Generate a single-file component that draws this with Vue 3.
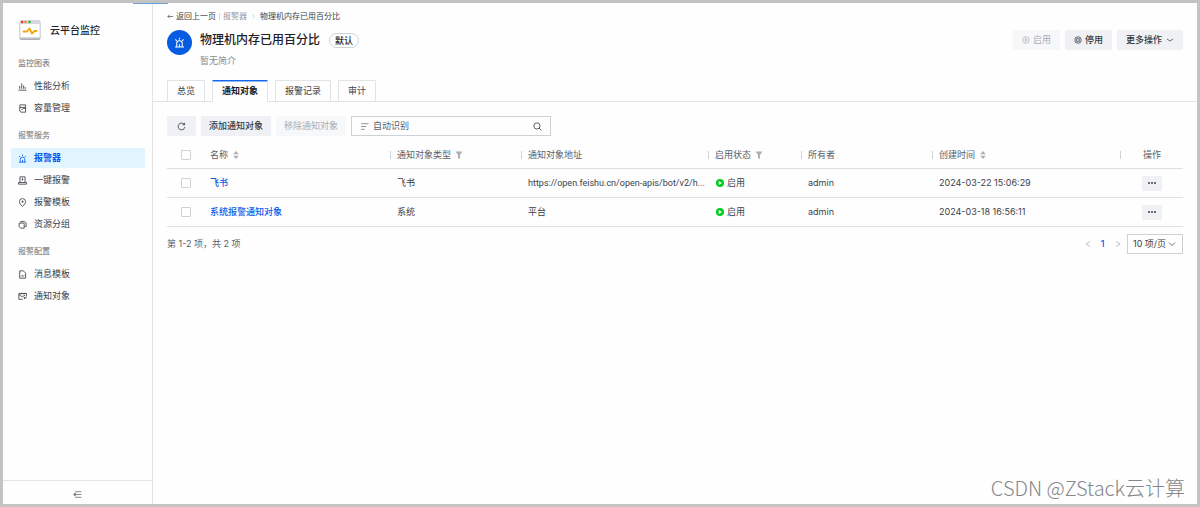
<script setup>
import { ref } from 'vue'

const groups = [
  { title: '监控图表', items: [{ label: '性能分析', icon: 'chart' }, { label: '容量管理', icon: 'disk' }] },
  {
    title: '报警服务',
    items: [
      { label: '报警器', icon: 'alarm', active: true },
      { label: '一键报警', icon: 'stamp' },
      { label: '报警模板', icon: 'pin' },
      { label: '资源分组', icon: 'stack' }
    ]
  },
  { title: '报警配置', items: [{ label: '消息模板', icon: 'doc' }, { label: '通知对象', icon: 'mail' }] }
]

const icons = {
  chart: 'M1 14.500h14M3 12V7M6.500 12V2.500M10 12V6M13 12V9',
  disk: 'M3.500 1.500h10v13H5.500L3 12.500zM3 6h10M6 11l3-3h4',
  alarm: 'M1.500 14.500h13M4 14V9.500a4 4 0 0 1 8 0V14M8 14v-3.500M8 1v2.500M2 3.500l2 2M14 3.500l-2 2',
  stamp: 'M1 14.500h14v-3H1zM3.500 11.500v-10h9v10M8 4v4M6.500 6h3',
  pin: 'M8 15C5 12 2.500 9.500 2.500 6.500a5.500 5.500 0 0 1 11 0C13.500 9.500 11 12 8 15zM8 4.500v3.500M6 6.500h4',
  stack: 'M2 5.500h9v9H4.500L2 12zM5 5V2.500h6.500L14.500 5v6.500H12',
  doc: 'M3 1.500h6.500L13.500 5.500v9H3zM5.500 11.500l2-2 1.500 2 2-2',
  mail: 'M8.500 13H1.500V3h12M1.500 4.500l6 4 5-3M2 2.500h13V8M15.500 10.500h-5M12.500 8.500l-2 2 2 2'
}

const tabs = ['总览', '通知对象', '报警记录', '审计']
const activeTab = ref('通知对象')
const keyword = ref('')
const pageSize = ref('10')

const columns = [
  { label: '名称', tool: 'sort' },
  { label: '通知对象类型', tool: 'filter' },
  { label: '通知对象地址' },
  { label: '启用状态', tool: 'filter' },
  { label: '所有者' },
  { label: '创建时间', tool: 'sort' }
]

const rows = [
  { name: '飞书', type: '飞书', address: 'https://open.feishu.cn/open-apis/bot/v2/h...', status: '启用', owner: 'admin', created: '2024-03-22 15:06:29' },
  { name: '系统报警通知对象', type: '系统', address: '平台', status: '启用', owner: 'admin', created: '2024-03-18 16:56:11' }
]
</script>

<template>
  <div class="frame">
    <div class="loading"></div>
    <aside class="sidebar">
      <div class="brand">
        <svg class="logo" viewBox="0 0 22 22" aria-hidden="true">
          <rect x="0.500" y="3" width="21" height="18" rx="2" fill="#a9adb5" />
          <rect x="0.500" y="1" width="21" height="18.500" rx="2" fill="#d5d8de" />
          <rect x="1.500" y="5" width="19" height="13" fill="#fff" />
          <circle cx="3" cy="3" r="1.300" fill="#f0344b" />
          <circle cx="6.500" cy="3" r="1.300" fill="#f58a1f" />
          <circle cx="10.500" cy="3" r="1.300" fill="#1fbf3a" />
          <path d="M4.500 12.500h3.500l2.500-3 2.500 5 2.500-2.500h2" fill="none" stroke="#fba50d" stroke-width="1.800" stroke-linecap="round" stroke-linejoin="round" />
        </svg>
        <span>云平台监控</span>
      </div>
      <nav class="nav">
        <section v-for="g in groups" :key="g.title" class="group">
          <h2>{{ g.title }}</h2>
          <a v-for="i in g.items" :key="i.label" href="#" class="nav-item" :class="{ active: i.active }">
            <svg viewBox="0 0 16 16" class="line-icon" aria-hidden="true"><path :d="icons[i.icon]" /></svg>
            {{ i.label }}
          </a>
        </section>
      </nav>
      <button class="collapse" aria-label="收起菜单">
        <svg viewBox="0 0 16 16" class="line-icon" aria-hidden="true"><path d="M4 3h11M2 8h13M4 13h11M4 5L1 8l3 3z" /></svg>
      </button>
    </aside>

    <main class="main">
      <header class="header">
        <div class="crumbs">
          <a href="#" class="back">
            <svg viewBox="0 0 16 16" class="line-icon tiny" aria-hidden="true"><path d="M14 8H2M6 4L2 8l4 4" /></svg>
            返回上一页
          </a>
          <i class="bar"></i>
          <a href="#" class="parent">报警器</a>
          <svg viewBox="0 0 16 16" class="line-icon tiny chev" aria-hidden="true"><path d="M6 4l4 4-4 4" /></svg>
          <span>物理机内存已用百分比</span>
        </div>
        <div class="heading">
          <span class="avatar">
            <svg viewBox="0 0 16 16" class="line-icon" aria-hidden="true"><path :d="icons.alarm" /></svg>
          </span>
          <div class="titles">
            <h1>物理机内存已用百分比 <span class="tag">默认</span></h1>
            <p>暂无简介</p>
          </div>
          <div class="actions">
            <button class="btn" disabled>
              <svg viewBox="0 0 16 16" class="line-icon small" aria-hidden="true"><circle cx="8" cy="8" r="6.500" /><path d="M6.500 5l4 3-4 3z" /></svg>
              启用
            </button>
            <button class="btn">
              <svg viewBox="0 0 16 16" class="line-icon small" aria-hidden="true"><circle cx="8" cy="8" r="6.500" /><rect x="5.500" y="5.500" width="5" height="5" /></svg>
              停用
            </button>
            <button class="btn more">
              更多操作
              <svg viewBox="0 0 16 16" class="line-icon small" aria-hidden="true"><path d="M2 6l6 4 6-4" /></svg>
            </button>
          </div>
        </div>
        <div class="tabs" role="tablist">
          <button v-for="t in tabs" :key="t" role="tab" class="tab" :class="{ on: t === activeTab }" :aria-selected="t === activeTab" @click="activeTab = t">{{ t }}</button>
        </div>
      </header>

      <div class="content">
        <div class="toolbar">
          <button class="btn refresh" aria-label="刷新">
            <svg viewBox="0 0 16 16" class="line-icon" aria-hidden="true"><path d="M13 4.500A6 6 0 1 0 14 9M13.500 1.500v3.500H10" /></svg>
          </button>
          <button class="btn tool-btn">添加通知对象</button>
          <button class="btn tool-btn" disabled>移除通知对象</button>
          <label class="search">
            <svg viewBox="0 0 16 16" class="line-icon" aria-hidden="true"><path d="M2 3h13M2 8h9M2 13h6" /></svg>
            <input v-model="keyword" type="text" placeholder="自动识别" aria-label="搜索" />
            <svg viewBox="0 0 16 16" class="line-icon dark" aria-hidden="true"><circle cx="7" cy="7" r="5.500" /><path d="M11 11l4 4" /></svg>
          </label>
        </div>

        <table>
          <colgroup>
            <col class="c-check" /><col class="c-name" /><col class="c-type" /><col class="c-name" />
            <col class="c-state" /><col class="c-type" /><col class="c-time" /><col class="c-op" />
          </colgroup>
          <thead>
            <tr>
              <th class="check"><input type="checkbox" aria-label="全选" /></th>
              <th v-for="c in columns" :key="c.label" class="sep">
                <span class="th">
                  {{ c.label }}
                  <svg v-if="c.tool === 'sort'" viewBox="0 0 8 10" class="tool" aria-hidden="true"><path d="M4 0L7.500 4h-7zM4 10L7.500 6h-7z" /></svg>
                  <svg v-if="c.tool === 'filter'" viewBox="0 0 8 8" class="tool" aria-hidden="true"><path d="M0.500 0.500h7L5 4v4L3 7V4z" /></svg>
                </span>
              </th>
              <th class="op">操作</th>
            </tr>
          </thead>
          <tbody>
            <tr v-for="r in rows" :key="r.name">
              <td class="check"><input type="checkbox" :aria-label="r.name" /></td>
              <td><a href="#" class="link">{{ r.name }}</a></td>
              <td>{{ r.type }}</td>
              <td class="address">{{ r.address }}</td>
              <td>
                <span class="state">
                  <svg viewBox="0 0 16 16" aria-hidden="true"><circle cx="8" cy="8" r="8" fill="#0c2" /><path d="M5.500 4l6.500 4-6.500 4z" fill="#fff" /></svg>
                  {{ r.status }}
                </span>
              </td>
              <td>{{ r.owner }}</td>
              <td>{{ r.created }}</td>
              <td class="op">
                <button class="dots" aria-label="更多">
                  <svg viewBox="0 0 10 4" aria-hidden="true"><circle cx="2" cy="2" r="1" /><circle cx="5" cy="2" r="1" /><circle cx="8" cy="2" r="1" /></svg>
                </button>
              </td>
            </tr>
          </tbody>
        </table>

        <footer class="pager">
          <span class="total">第 1-2 项，共 2 项</span>
          <button class="page" aria-label="上一页"><svg viewBox="0 0 16 16" class="line-icon small" aria-hidden="true"><path d="M12 3L4 8l8 5" /></svg></button>
          <button class="page current">1</button>
          <button class="page" aria-label="下一页"><svg viewBox="0 0 16 16" class="line-icon small" aria-hidden="true"><path d="M4 3l8 5-8 5" /></svg></button>
          <label class="size">
            <select v-model="pageSize" aria-label="每页条数">
              <option value="10">10 项/页</option>
              <option value="20">20 项/页</option>
            </select>
            <svg viewBox="0 0 16 16" class="line-icon small" aria-hidden="true"><path d="M2 5l6 6 6-6" /></svg>
          </label>
        </footer>
      </div>
    </main>
    <div class="watermark">CSDN @ZStack云计算</div>
  </div>
</template>

<style>
body {
  margin: 0;
}
</style>

<style scoped>
.frame,
.frame * {
  box-sizing: border-box;
}
.frame {
  position: relative;
  display: flex;
  min-height: 100vh;
  border: 3px solid #c3c3c3;
  background: #fefefe;
  color: #3c4148;
  font: 9px/12px Inter, "Noto Sans CJK SC", sans-serif;
}
button,
input,
select {
  margin: 0;
  padding: 0;
  border: 0;
  background: none;
  color: inherit;
  font: inherit;
}
a {
  color: inherit;
  text-decoration: none;
}
.loading {
  position: absolute;
  top: 0;
  left: 130px;
  width: 35px;
  height: 1px;
  background: #6a9fd8;
}
.line-icon {
  flex: none;
  width: 9px;
  height: 9px;
  fill: none;
  stroke: currentColor;
  stroke-width: 1.5;
}
.line-icon.small {
  width: 8px;
  height: 8px;
}
.line-icon.tiny {
  width: 7px;
  height: 7px;
}

.sidebar {
  display: flex;
  flex: none;
  flex-direction: column;
  width: 150px;
  border-right: 1px solid #e4e4e6;
}
.brand {
  display: flex;
  align-items: center;
  gap: 9px;
  height: 54px;
  padding-left: 16px;
  color: #22262c;
  font-size: 10px;
  font-weight: 500;
}
.logo {
  width: 22px;
  height: 22px;
}
.nav {
  flex: 1;
  padding: 0 7px 0 8px;
}
.group {
  display: flex;
  flex-direction: column;
  gap: 2px;
  margin-bottom: 11px;
}
.group h2 {
  margin: 0 0 5px;
  padding-left: 7px;
  color: #6c7178;
  font-size: 8px;
  font-weight: 400;
}
.nav-item {
  display: flex;
  align-items: center;
  gap: 7px;
  height: 20px;
  padding-left: 7px;
  border-radius: 1px;
}
.nav-item.active {
  background: #e0f5ff;
  color: #0a5ae8;
  font-weight: 700;
}
.collapse {
  display: flex;
  align-items: center;
  justify-content: center;
  height: 24px;
  padding-top: 4px;
  border-top: 1px solid #e4e4e6;
  color: #70757c;
}

.main {
  flex: 1;
  min-width: 0;
}
.header {
  padding: 7px 14px 0;
  border-bottom: 1px solid #e2e3e5;
}
.crumbs {
  display: flex;
  align-items: center;
  gap: 3px;
  height: 12px;
  font-size: 8px;
}
.back {
  display: flex;
  align-items: center;
  gap: 2px;
}
.bar {
  width: 1px;
  height: 7px;
  background: #d5d7da;
}
.parent {
  color: #94989e;
}
.chev {
  color: #b5b8bc;
}
.heading {
  display: flex;
  align-items: flex-start;
  gap: 8px;
  height: 50px;
  padding-top: 8px;
}
.avatar {
  display: flex;
  align-items: center;
  justify-content: center;
  width: 25px;
  height: 25px;
  border-radius: 50%;
  background: #065be0;
  color: #fff;
}
.avatar .line-icon {
  width: 11px;
  height: 11px;
}
.titles {
  flex: 1;
}
h1 {
  display: flex;
  align-items: center;
  gap: 9px;
  height: 20px;
  margin: 0;
  color: #1d2127;
  font-size: 12px;
  font-weight: 500;
}
.tag {
  height: 15px;
  padding: 0 5px;
  border: 1px solid #cfd2d6;
  border-radius: 8px;
  font-size: 9px;
  line-height: 13px;
}
p {
  margin: 5px 0 0;
  color: #868b92;
}
.actions {
  display: flex;
  gap: 5px;
}
.btn {
  display: flex;
  align-items: center;
  justify-content: center;
  gap: 3px;
  height: 20px;
  padding: 0 9px;
  border-radius: 1px;
  background: #eff1f5;
  color: #353a42;
  font-weight: 500;
  white-space: nowrap;
}
.btn:disabled {
  background: #f7f8fa;
  color: #a9adb3;
  font-weight: 400;
}
.tool-btn {
  padding: 0 8px;
}
.more {
  gap: 4px;
}
.tabs {
  display: flex;
  gap: 7px;
  margin-top: 8px;
  margin-bottom: -1px;
}
.tab {
  height: 22px;
  padding: 0 9px;
  border: 1px solid #e2e3e5;
  border-radius: 1px 1px 0 0;
}
.tab.on {
  border-top: 1px solid #1668ea;
  border-bottom-color: #fefefe;
  background: #fefefe;
  box-shadow: inset 0 1px #8fb6f5;
  color: #15181d;
  font-weight: 700;
}

.content {
  padding: 14px 14px 0;
}
.toolbar {
  display: flex;
  gap: 5px;
}
.refresh {
  width: 29px;
}
.search {
  display: flex;
  align-items: center;
  gap: 4px;
  width: 200px;
  height: 20px;
  padding: 0 8px;
  border: 1px solid #cfd1d4;
  color: #7b8087;
}
.search input {
  flex: 1;
  min-width: 0;
  outline: 0;
}
.search input::placeholder {
  color: #5a5f66;
}
.dark {
  color: #3c4148;
}
table {
  width: 100%;
  margin-top: 6px;
  border-spacing: 0;
  table-layout: fixed;
}
.c-check { width: 37px; }
.c-name { width: 187px; }
.c-type { width: 131px; }
.c-state { width: 93px; }
.c-time { width: 188px; }
.c-op { width: 62px; }
th,
td {
  height: 29px;
  padding: 0 6px;
  overflow: hidden;
  border-bottom: 1px solid #dedfe1;
  text-align: left;
  text-overflow: ellipsis;
  white-space: nowrap;
}
th {
  position: relative;
  height: 27px;
  color: #5b6068;
  font-weight: 400;
}
.address {
  padding-right: 0;
  font-family: Roboto, "Noto Sans CJK SC", sans-serif;
}
.sep::after {
  position: absolute;
  top: 9px;
  right: 0;
  width: 1px;
  height: 8px;
  background: #d0d2d5;
  content: "";
}
.th,
.state {
  display: flex;
  align-items: center;
  gap: 4px;
}
.tool {
  width: 8px;
  height: 8px;
  fill: #adb0b5;
}
.check,
.op {
  text-align: center;
}
input[type="checkbox"] {
  display: block;
  width: 10px;
  height: 10px;
  margin: 0 auto;
  border: 1px solid #d0d2d5;
  border-radius: 1px;
  appearance: none;
  background: #fff;
}
input[type="checkbox"]:checked {
  background: #0a5ae8;
}
.link {
  color: #0a5ae8;
  font-weight: 500;
}
.state {
  gap: 3px;
}
.state svg {
  width: 8px;
  height: 8px;
  margin-left: 1px;
}
.dots {
  display: block;
  width: 20px;
  height: 15px;
  margin: 0 auto;
  border-radius: 1px;
  background: #eff1f5;
}
.dots svg {
  display: block;
  width: 10px;
  height: 4px;
  margin: 0 auto;
  fill: #3c4148;
}
.pager {
  display: flex;
  align-items: center;
  height: 20px;
  margin-top: 7px;
}
.total {
  flex: 1;
  color: #5b6068;
}
.page {
  display: flex;
  align-items: center;
  justify-content: center;
  width: 15px;
  height: 15px;
  color: #a9adb3;
}
.page.current {
  color: #0a5ae8;
  font-weight: 500;
}
.size {
  display: flex;
  align-items: center;
  width: 56px;
  height: 20px;
  margin-left: 2px;
  padding: 0 6px 0 5px;
  border: 1px solid #cfd1d4;
}
.size select {
  flex: 1;
  min-width: 0;
  appearance: none;
  outline: 0;
}
.watermark {
  position: absolute;
  right: 12px;
  bottom: 4px;
  color: #85878a;
  font: 300 20px/24px "Noto Sans CJK SC", sans-serif;
  text-shadow: 1px 1px #fff;
}
</style>
